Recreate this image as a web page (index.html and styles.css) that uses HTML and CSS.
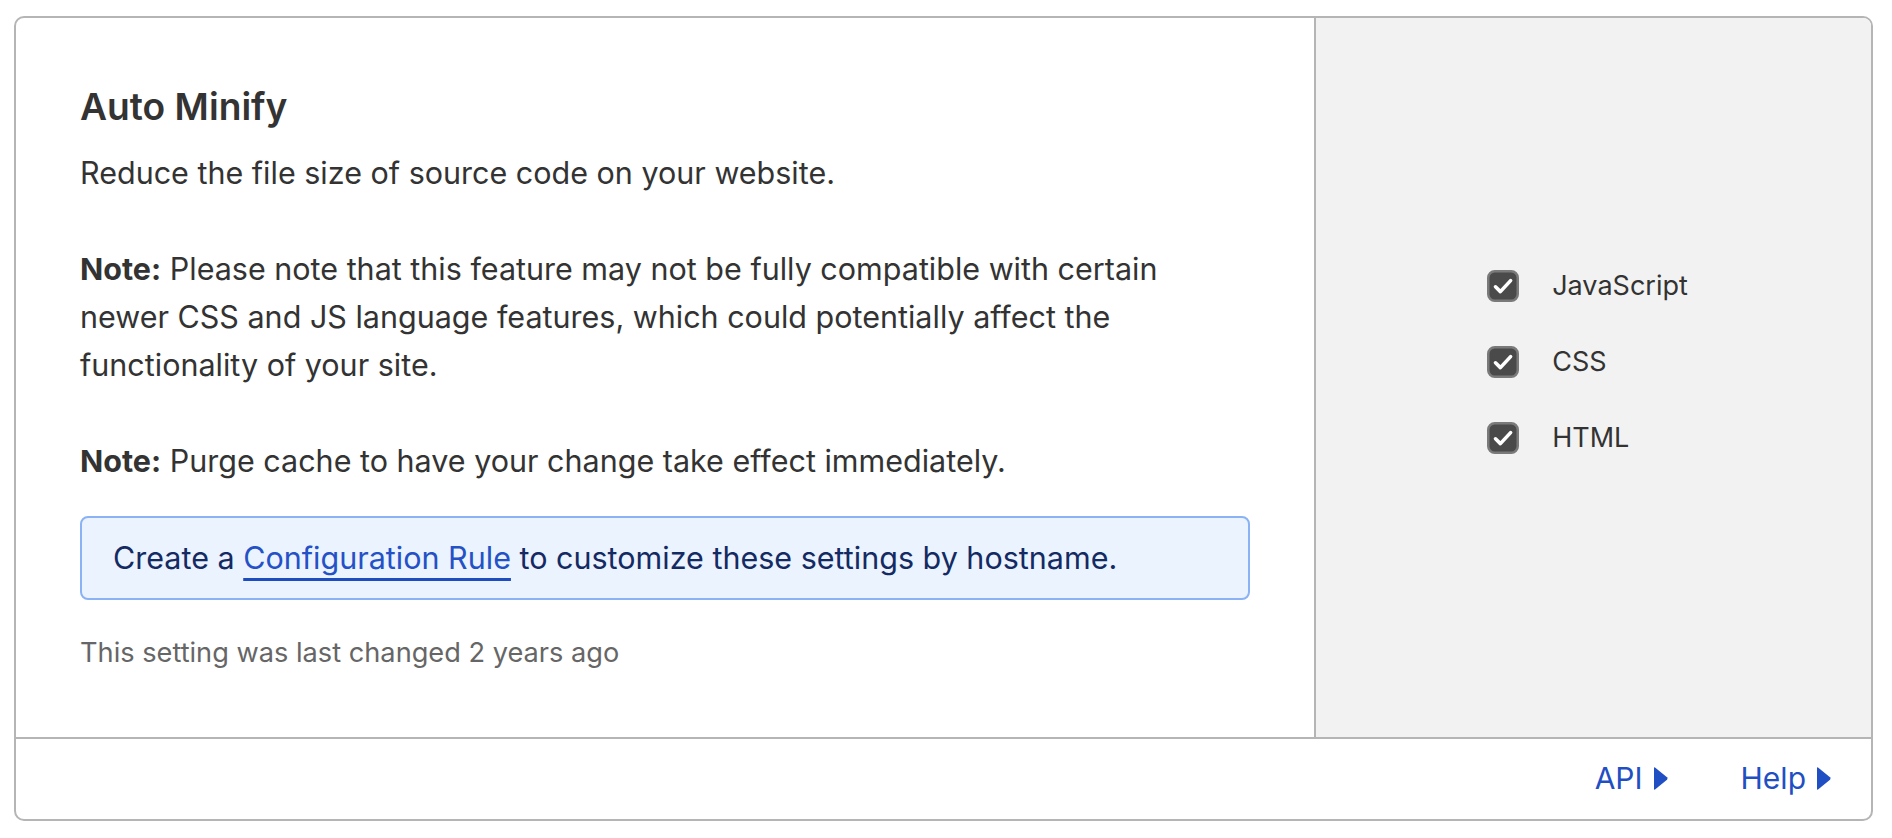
FILE: index.html
```html
<!DOCTYPE html>
<html lang="en">
<head>
<meta charset="utf-8">
<title>Auto Minify</title>
<link rel="stylesheet" href="styles.css">
</head>
<body>
<div class="card">
  <div class="card-main">
    <div class="content">
      <h2 class="title">Auto Minify</h2>
      <p class="desc">Reduce the file size of source code on your website.</p>
      <p class="desc"><strong>Note:</strong> Please note that this feature may not be fully compatible with certain newer CSS and JS language features, which could potentially affect the functionality of your site.</p>
      <p class="desc desc-last"><strong>Note:</strong> Purge cache to have your change take effect immediately.</p>
      <div class="info">Create a <a class="info-link" href="#">Configuration Rule</a> to customize these settings by hostname.</div>
      <p class="changed">This setting was last changed 2 years ago</p>
    </div>
    <div class="panel">
      <div class="checks">
        <label class="check-row">
          <svg class="check-box" width="32" height="32" viewBox="0 0 32 32"><rect x="1.25" y="1.25" width="29.5" height="29.5" rx="6.5" fill="#4a4a4a" stroke="#7a7a7a" stroke-width="2.5"/><path d="M8.5 16.8 L13.4 21.6 L23.6 10.6" fill="none" stroke="#fff" stroke-width="3.6" stroke-linecap="round" stroke-linejoin="round"/></svg>
          <span class="check-label">JavaScript</span>
        </label>
        <label class="check-row">
          <svg class="check-box" width="32" height="32" viewBox="0 0 32 32"><rect x="1.25" y="1.25" width="29.5" height="29.5" rx="6.5" fill="#4a4a4a" stroke="#7a7a7a" stroke-width="2.5"/><path d="M8.5 16.8 L13.4 21.6 L23.6 10.6" fill="none" stroke="#fff" stroke-width="3.6" stroke-linecap="round" stroke-linejoin="round"/></svg>
          <span class="check-label">CSS</span>
        </label>
        <label class="check-row">
          <svg class="check-box" width="32" height="32" viewBox="0 0 32 32"><rect x="1.25" y="1.25" width="29.5" height="29.5" rx="6.5" fill="#4a4a4a" stroke="#7a7a7a" stroke-width="2.5"/><path d="M8.5 16.8 L13.4 21.6 L23.6 10.6" fill="none" stroke="#fff" stroke-width="3.6" stroke-linecap="round" stroke-linejoin="round"/></svg>
          <span class="check-label">HTML</span>
        </label>
      </div>
    </div>
  </div>
  <div class="card-footer">
    <a class="foot-link" href="#">API<svg class="arrow" width="14" height="25" viewBox="0 0 14 25"><path d="M1 1.5 L13 11.3 Q14 12.5 13 13.7 L1 23.5 Q0 24.3 0 23 L0 2 Q0 0.7 1 1.5 Z" fill="#1f4fc3"/></svg></a>
    <a class="foot-link" href="#">Help<svg class="arrow" width="14" height="25" viewBox="0 0 14 25"><path d="M1 1.5 L13 11.3 Q14 12.5 13 13.7 L1 23.5 Q0 24.3 0 23 L0 2 Q0 0.7 1 1.5 Z" fill="#1f4fc3"/></svg></a>
  </div>
</div>
</body>
</html>
```
FILE: styles.css
```css
* { box-sizing: border-box; }
html, body { margin: 0; padding: 0; background: #fff; }
body {
  font-family: Inter, "Noto Sans", "Liberation Sans", sans-serif;
  color: #333;
  padding: 16px 19px 0 14px;
}
.card {
  border: 2px solid #b5b5b5;
  border-radius: 10px;
  overflow: hidden;
  height: 805px;
  display: flex;
  flex-direction: column;
}
.card-main {
  display: flex;
  height: 721px;
  border-bottom: 2px solid #b5b5b5;
}
.content {
  flex: 1;
  padding: 65px 64px 0 64px;
}
.title {
  margin: 0 0 18px 0;
  font-size: 37.2px;
  line-height: 48px;
  font-weight: 600;
  color: #333;
}
.desc {
  margin: 0 0 48px 0;
  font-size: 30.5px;
  line-height: 48px;
}
.desc-last { margin-bottom: 31px; }
.desc strong { font-weight: 700; }
.info {
  background: #ebf3fe;
  border: 2px solid #8ab2f4;
  border-radius: 8px;
  padding: 17px 31px;
  font-size: 30.5px;
  line-height: 46px;
  color: #142a63;
}
.info-link {
  color: #2451c6;
  text-decoration: underline;
  text-decoration-color: #1d4cbf;
  text-decoration-thickness: 3px;
  text-underline-offset: 9px;
}
.changed {
  margin: 32px 0 0 0;
  font-size: 27.2px;
  line-height: 42px;
  color: #666;
}
.panel {
  width: 557px;
  background: #f2f2f2;
  border-left: 2px solid #b5b5b5;
  display: flex;
  align-items: center;
  justify-content: center;
  padding: 0 12px 31px 0;
}
.checks {
  display: flex;
  flex-direction: column;
  gap: 44px;
}
.check-row {
  display: flex;
  align-items: center;
  gap: 33px;
}
.check-box { display: block; flex: none; }
.check-label {
  font-size: 27px;
  line-height: 32px;
  color: #333;
}
.card-footer {
  flex: 1;
  display: flex;
  justify-content: flex-end;
  align-items: center;
  gap: 73px;
  padding: 0 40px 2px 0;
}
.foot-link {
  display: flex;
  align-items: center;
  gap: 11px;
  font-size: 30px;
  line-height: 40px;
  color: #1f4fc3;
  text-decoration: none;
}
.arrow { display: block; }
```
